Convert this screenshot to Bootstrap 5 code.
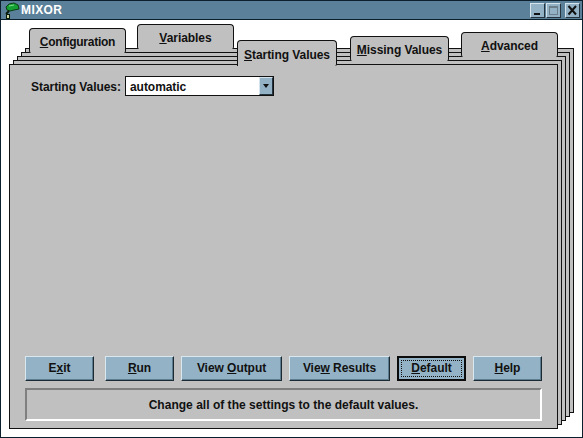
<!DOCTYPE html>
<html lang="en">
<head>
<meta charset="utf-8">
<title>MIXOR</title>
<link rel="stylesheet" href="https://cdn.jsdelivr.net/npm/bootstrap@5.3.0/dist/css/bootstrap.min.css">
<style>
html,body{height:100%;margin:0;background:#fff;overflow:hidden}
body{font:bold 12px/14px "Liberation Sans",Arial,sans-serif;color:#111;letter-spacing:-.05px}
u{text-underline-offset:1px}
.win{width:583px;height:438px;background:#fff;border:1px solid #0c1f2c}
.titlebar{height:18px;background:#5a8199;border-bottom:1px solid #0c1f2c;box-sizing:content-box;flex:none;padding-left:2px}
.titlebar .ttl{color:#fff;font-size:12px;letter-spacing:.4px;margin-left:1px}
.ctl{width:15px;height:15px;background:#93b2c6;border:1px solid;border-color:#d5e3ec #24333d #24333d #d5e3ec;padding:0;color:#111}
.ctl svg{flex:none}
.ctl.dim svg{opacity:.4}
.ctls{margin-right:2px;gap:1px}
.ctls .cl{margin-left:3px}
.deck{position:relative;flex:1 1 auto;min-height:0}
.sheet{position:absolute;background:#c0c0c0;border:1px solid #111;width:549px;height:365px}
.s4{left:24px;top:28px}
.s3{left:20px;top:32px}
.s2{left:16px;top:36px}
.s1{left:12px;top:40px}
.front{position:absolute;left:8px;top:44px;width:549px;height:365px;background:#c0c0c0;border:1px solid #111;padding:11px 15px 7px 15px}
.tabx{position:absolute;height:25px;background:#c0c0c0;border:1px solid #111;border-bottom:0;border-radius:4px 4px 2px 2px;display:flex;justify-content:center;align-items:center;padding-top:2px}
.t-conf{left:28px;top:8px;width:97px;letter-spacing:-.25px}
.t-vars{left:136px;top:4px;width:97px}
.t-start{left:236px;top:20px;width:100px;height:26px;padding-top:2px;border-radius:4px 4px 2px 0}
.t-miss{left:349px;top:16px;width:99px}
.t-adv{left:460px;top:12px;width:97px}
.lbl{margin-left:6px;width:94px;flex:none;margin-top:1px}
.combo{width:149px;height:20px;background:#fff;border:1px solid #111;padding-left:4px}
.combo>span:first-child{margin-top:1px}
.combo .arrow{width:14px;height:18px;background:#93b2c6;border:1px solid;border-color:#d5e3ec #24333d #24333d #d5e3ec}
.row-btns{gap:7px;margin-bottom:7px}
.btn.wbtn{height:25px;padding:0 0 1px;font:inherit;color:#111;background:#93b2c6;border:1px solid;border-color:#dbe7ee #1c2a33 #1c2a33 #dbe7ee;border-radius:0;box-shadow:inset -1px -1px 0 #5f7d90;display:flex;align-items:center;justify-content:center;letter-spacing:-.05px}
.w70{width:69px}
.w102{width:101px}
.ex1{margin-right:4px}
.btn.wbtn.deflt{border:2px solid #0b0b0b;box-shadow:none;position:relative}
.deflt::after{content:"";position:absolute;inset:2px;border:1px dotted #111}
.status{height:33px;border:2px solid;border-color:#7f7f7f #fff #fff #7f7f7f;width:517px;text-align:center;letter-spacing:.02px}
.spacer{flex:1 1 auto}
</style>
</head>
<body>
<div class="win d-flex flex-column">
  <div class="titlebar d-flex align-items-center">
    <svg width="17" height="17" viewBox="0 0 17 17">
      <path d="M3 5 L6 2 L11 1 L15 3 L16 7 L11 8 L7 9 L4 8 Z" fill="#15a034" stroke="#0b3d14" stroke-width="1"/>
      <path d="M6 4 L11 3" stroke="#7fe08a" stroke-width="1"/>
      <path d="M6 9 L3 12" stroke="#0a1a0a" stroke-width="2"/>
      <rect x="3.5" y="12.5" width="3" height="4" fill="#c9d6a0" stroke="#0a1a0a" stroke-width="1"/>
    </svg>
    <span class="ttl">MIXOR</span>
    <div class="ms-auto d-flex ctls">
      <button class="ctl d-flex" aria-label="Minimize"><svg width="13" height="13"><rect x="3" y="9" width="6" height="2" fill="#111"/></svg></button>
      <button class="ctl dim d-flex" aria-label="Maximize"><svg width="13" height="13"><rect x="2.5" y="2.5" width="8" height="8" fill="none" stroke="#333"/><rect x="2" y="2" width="9" height="2" fill="#333"/></svg></button>
      <button class="ctl cl d-flex" aria-label="Close"><svg width="13" height="13"><path d="M2.5 2 L10 10.5 M10 2 L2.5 10.5" stroke="#111" stroke-width="2"/></svg></button>
    </div>
  </div>
  <div class="deck">
    <div class="sheet s4"></div>
    <div class="tabx t-vars"><span><u>V</u>ariables</span></div>
    <div class="sheet s3"></div>
    <div class="tabx t-conf"><span><u>C</u>onfiguration</span></div>
    <div class="sheet s2"></div>
    <div class="tabx t-adv"><span><u>A</u>dvanced</span></div>
    <div class="sheet s1"></div>
    <div class="tabx t-miss"><span><u>M</u>issing Values</span></div>
    <div class="front d-flex flex-column">
      <div class="d-flex align-items-center">
        <span class="lbl">Starting Values:</span>
        <div class="combo d-flex align-items-center justify-content-between">
          <span>automatic</span>
          <span class="arrow d-flex align-items-center justify-content-center"><svg width="8" height="6"><path d="M1 1 H7 L4 5 Z" fill="#111"/></svg></span>
        </div>
      </div>
      <div class="spacer"></div>
      <div class="d-flex row-btns">
        <button class="btn wbtn w70 ex1">E<u>x</u>it</button>
        <button class="btn wbtn w70"><span><u>R</u>un</span></button>
        <button class="btn wbtn w102"><span>View <u>O</u>utput</span></button>
        <button class="btn wbtn w102"><span>Vie<u>w</u> Results</span></button>
        <button class="btn wbtn w70 deflt"><span><u>D</u>efault</span></button>
        <button class="btn wbtn w70"><span><u>H</u>elp</span></button>
      </div>
      <div class="status d-flex align-items-center justify-content-center">Change all of the settings to the default values.</div>
    </div>
    <div class="tabx t-start"><span><u>S</u>tarting Values</span></div>
  </div>
</div>
</body>
</html>
